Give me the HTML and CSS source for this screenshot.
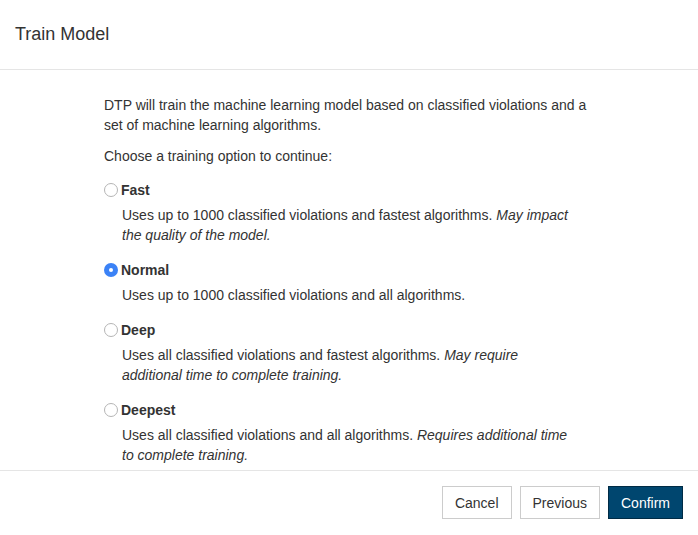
FILE: index.html
```html
<!DOCTYPE html>
<html>
<head>
<meta charset="utf-8">
<link rel="stylesheet" href="styles.css">
</head>
<body>
<div class="dialog">
  <div class="header"><h1 class="title">Train Model</h1></div>
  <div class="content">
    <div class="inner">
      <p class="intro">DTP will train the machine learning model based on classified violations and a set of machine learning algorithms.</p>
      <p class="choose">Choose a training option to continue:</p>
      <div class="option">
        <label class="opt-label"><span class="radio"></span>Fast</label>
        <p class="desc">Uses up to 1000 classified violations and fastest algorithms. <em>May impact the quality of the model.</em></p>
      </div>
      <div class="option">
        <label class="opt-label"><span class="radio checked"></span>Normal</label>
        <p class="desc">Uses up to 1000 classified violations and all algorithms.</p>
      </div>
      <div class="option">
        <label class="opt-label"><span class="radio"></span>Deep</label>
        <p class="desc">Uses all classified violations and fastest algorithms. <em>May require additional time to complete training.</em></p>
      </div>
      <div class="option">
        <label class="opt-label"><span class="radio"></span>Deepest</label>
        <p class="desc">Uses all classified violations and all algorithms. <em>Requires additional time to complete training.</em></p>
      </div>
    </div>
  </div>
  <div class="footer">
    <button class="btn">Cancel</button>
    <button class="btn">Previous</button>
    <button class="btn primary">Confirm</button>
  </div>
</div>
</body>
</html>
```
FILE: styles.css
```css
html, body { margin: 0; padding: 0; background: #fff; }
body { font-family: "Liberation Sans", Arial, sans-serif; color: #333; width: 698px; height: 535px; overflow: hidden; }
.dialog { display: flex; flex-direction: column; height: 535px; }
.header { height: 69px; border-bottom: 1px solid #e5e5e5; display: flex; align-items: center; padding-left: 15px; box-sizing: content-box; }
.title { margin: 0; font-size: 18px; font-weight: normal; color: #333; line-height: 22px; position: relative; top: -1px; }
.content { height: 400px; overflow: hidden; }
.inner { width: 490px; margin-left: 104px; padding-top: 25px; font-size: 14px; line-height: 20px; }
.intro { margin: 0; }
.choose { margin: 11px 0 0; }
.option { margin-top: 14px; }
.option + .option { margin-top: 15px; }
.opt-label { display: flex; align-items: center; font-weight: bold; line-height: 20px; }
.radio { width: 14px; height: 14px; box-sizing: border-box; border: 1px solid #b5b5b5; border-radius: 50%; margin-right: 3px; background: #fff; }
.radio.checked { background: #3b82f6; border: none; position: relative; }
.radio.checked::after { content: ""; position: absolute; left: 5px; top: 5px; width: 4px; height: 4px; border-radius: 50%; background: #fff; }
.desc { margin: 5px 0 0 18px; width: 452px; }
.footer { border-top: 1px solid #e5e5e5; flex: 1; display: flex; justify-content: flex-end; align-items: flex-start; padding: 15px 15px 0 0; gap: 8px; }
.btn { font-family: "Liberation Sans", Arial, sans-serif; font-size: 14px; height: 33px; padding: 0 12px; background: #fff; border: 1px solid #ccc; color: #333; cursor: pointer; border-radius: 0; }
.btn.primary { background: #00466f; border-color: #002b45; color: #fff; }
```
